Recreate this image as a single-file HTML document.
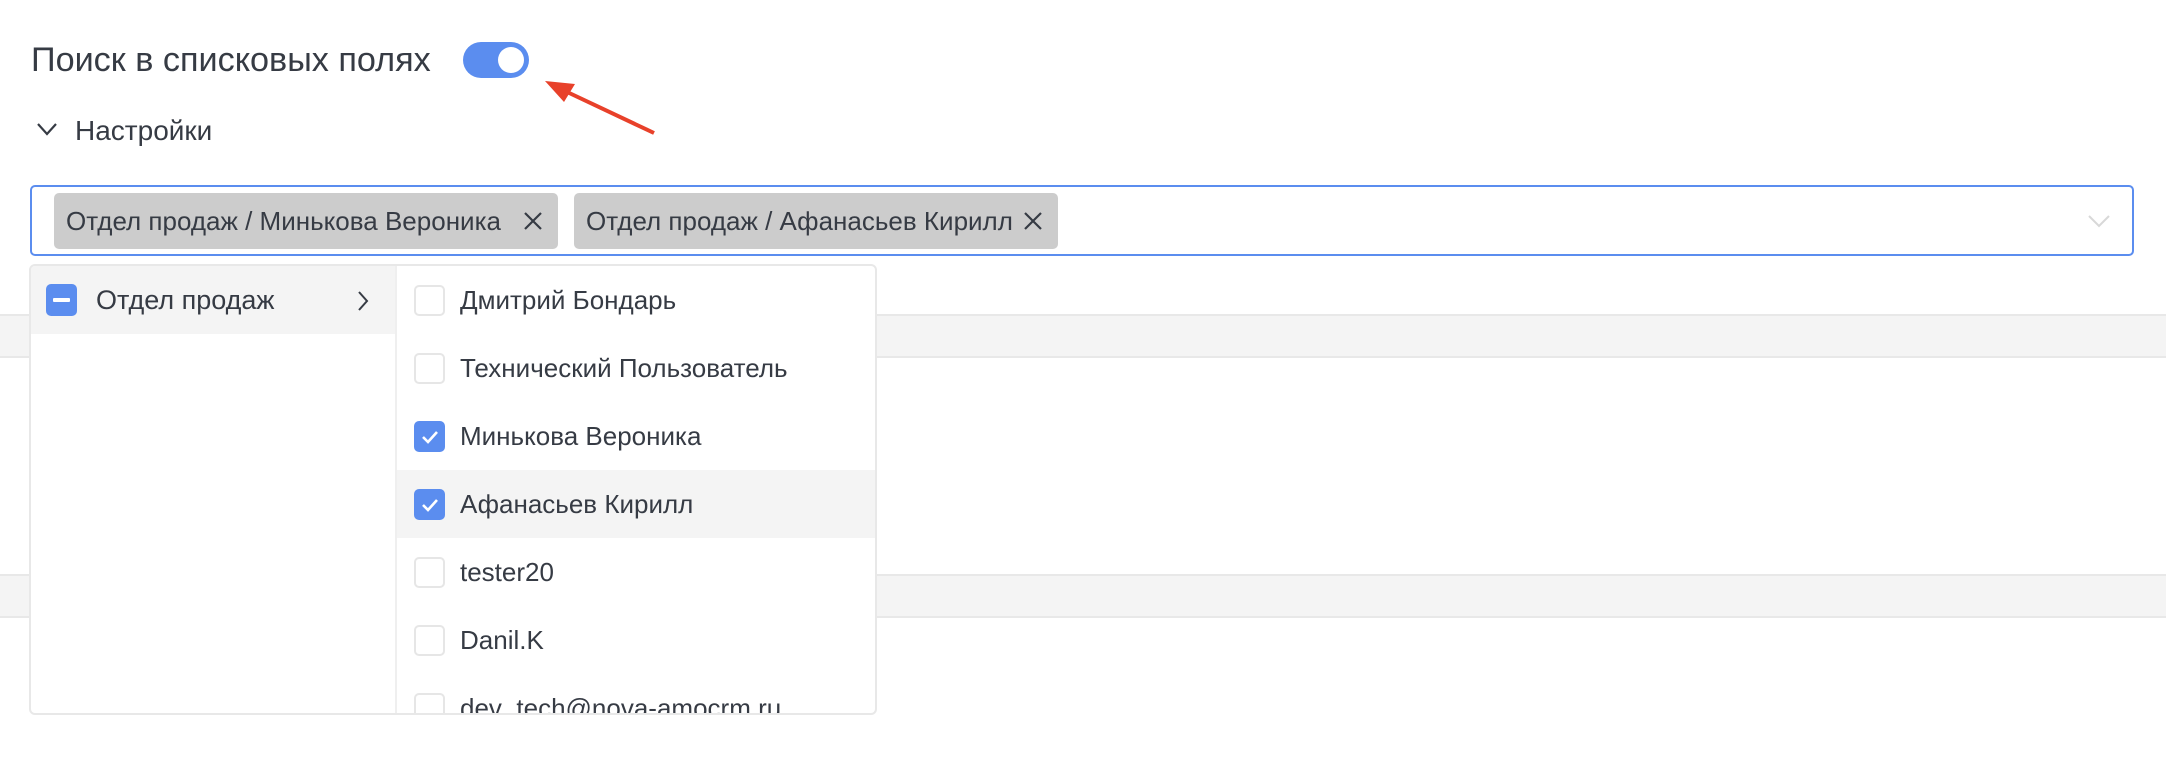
<!DOCTYPE html>
<html><head><meta charset="utf-8"><style>
*{margin:0;padding:0;box-sizing:border-box}
body{width:2166px;height:762px;background:#fff;position:relative;overflow:hidden;font-family:"Liberation Sans","Noto Sans CJK SC",sans-serif;color:#363b44}
.abs{position:absolute}
.band{position:absolute;left:0;width:2166px;height:44px;background:#f4f4f4;border-top:2px solid #e8e8e8;border-bottom:2px solid #e8e8e8}
.title{left:31px;top:42px;font-size:34.2px;line-height:36px;white-space:nowrap}
.toggle{left:463px;top:42px;width:66px;height:36px;border-radius:18px;background:#5b8def}
.toggle i{position:absolute;right:5px;top:5px;width:26px;height:26px;border-radius:50%;background:#fff}
.set{left:75px;top:116px;font-size:28px;line-height:30px}
.box{left:30px;top:185px;width:2104px;height:71px;border:2px solid #5b8def;border-radius:5px}
.chip{position:absolute;top:193px;height:56px;background:#cccccc;border-radius:5px;font-size:26px;line-height:56px;padding-left:12px;white-space:nowrap}
.dd{left:29px;top:264px;width:848px;height:451px;border:2px solid #e8e8e8;border-radius:6px;background:#fff;overflow:hidden}
.row{position:absolute;left:366px;width:480px;height:68px;font-size:26px;line-height:68px}
.cb{position:absolute;left:17px;top:19px;width:31px;height:31px;border:2px solid #e6e6e6;border-radius:5px;background:#fff}
.cb.on{background:#5b8def;border-color:#5b8def}
.row span{position:absolute;left:63px;top:0;white-space:nowrap}
</style></head><body>
<div class="band" style="top:314px"></div>
<div class="band" style="top:574px"></div>

<div class="abs title">Поиск в списковых полях</div>
<div class="abs toggle"><i></i></div>

<svg class="abs" style="left:0;top:0" width="2166" height="762">
<path d="M38 124 L47 134 L56 124" fill="none" stroke="#363b44" stroke-width="2.2"/>
<path d="M2089 216 L2099 226 L2109 216" fill="none" stroke="#d8d8d8" stroke-width="2"/>
<line x1="654" y1="133" x2="565" y2="91" stroke="#e8412a" stroke-width="4"/>
<polygon points="545,81 575,84 564,102" fill="#e8412a"/>
<line x1="260" y1="620" x2="312" y2="568" stroke="#e8412a" stroke-width="4"/>
<polygon points="325,555 318,583 300,568" fill="#e8412a"/>
</svg>

<div class="abs set">Настройки</div>

<div class="abs box"></div>
<div class="chip" style="left:54px;width:504px">Отдел продаж / Минькова Вероника<svg class="abs" style="left:470px;top:19px" width="18" height="18"><path d="M1 1L17 17M17 1L1 17" stroke="#363b44" stroke-width="2.2"/></svg></div>
<div class="chip" style="left:574px;width:484px">Отдел продаж / Афанасьев Кирилл<svg class="abs" style="left:450px;top:19px" width="18" height="18"><path d="M1 1L17 17M17 1L1 17" stroke="#363b44" stroke-width="2.2"/></svg></div>

<div class="abs dd">
  <div class="abs" style="left:0;top:0;width:364px;height:68px;background:#f4f4f4"></div>
  <div class="abs" style="left:364px;top:0;width:2px;height:451px;background:#efefef"></div>
  <div class="abs" style="left:15px;top:18px;width:31px;height:32px;border-radius:5px;background:#5b8def"><div class="abs" style="left:7px;top:14px;width:17px;height:4px;background:#fff;border-radius:1px"></div></div>
  <div class="abs" style="left:65px;top:0;font-size:27px;line-height:68px">Отдел продаж</div>
  <svg class="abs" style="left:325px;top:24px" width="14" height="22"><path d="M3 2L11 11L3 20" fill="none" stroke="#363b44" stroke-width="2"/></svg>

  <div class="row" style="top:0"><div class="cb"></div><span>Дмитрий Бондарь</span></div>
  <div class="row" style="top:68px"><div class="cb"></div><span>Технический Пользователь</span></div>
  <div class="row" style="top:136px"><div class="cb on"><svg class="abs" style="left:4px;top:5px" width="20" height="18"><path d="M3 9L8 14L17 4" fill="none" stroke="#fff" stroke-width="2.6"/></svg></div><span>Минькова Вероника</span></div>
  <div class="row" style="top:204px;background:#f4f4f4"><div class="cb on"><svg class="abs" style="left:4px;top:5px" width="20" height="18"><path d="M3 9L8 14L17 4" fill="none" stroke="#fff" stroke-width="2.6"/></svg></div><span>Афанасьев Кирилл</span></div>
  <div class="row" style="top:272px"><div class="cb"></div><span>tester20</span></div>
  <div class="row" style="top:340px"><div class="cb"></div><span>Danil.K</span></div>
  <div class="row" style="top:408px"><div class="cb"></div><span>dev_tech@nova-amocrm.ru</span></div>
</div>
</body></html>
